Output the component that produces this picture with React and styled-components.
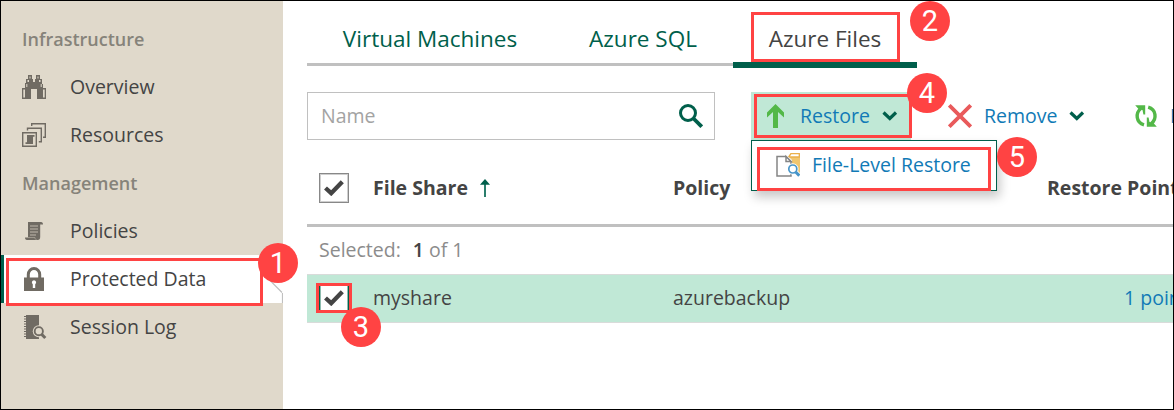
import React from "react";
import styled, { createGlobalStyle, css } from "styled-components";

const c = {
  green: "#005f4b",
  mint: "#c0e8d6",
  sand: "#e0d9cb",
  icon: "#706b63",
  text: "#444444",
  link: "#117ab6",
  line: "#c0c0c0",
  red: "#ff4343",
};

const GlobalStyle = createGlobalStyle`
  * { box-sizing: border-box; }
  body { margin: 0; background: #fff; }
  svg { display: block; flex: none; }
`;

const Frame = styled.div`
  position: relative;
  display: flex;
  width: 1174px;
  height: 410px;
  border: 1px solid #000;
  overflow: hidden;
  background: #fff;
  color: ${c.text};
  font-family: "Open Sans", sans-serif;
  font-size: 19.5px;
  line-height: 26px;
  white-space: nowrap;
`;

const Sidebar = styled.nav`
  flex: none;
  width: 282px;
  padding-top: 14px;
  background: ${c.sand};
`;

const NavHeading = styled.div`
  display: flex;
  align-items: center;
  height: 48px;
  padding-left: 21px;
  color: #86837a;
  font-weight: 600;
  font-size: 18px;
`;

const NavItem = styled.div`
  display: flex;
  align-items: center;
  gap: 24px;
  height: 48px;
  padding-left: 21px;
  ${(p) =>
    p.$active &&
    css`
      position: relative;
      padding-left: 18px;
      border-left: 3px solid ${c.green};
      background: #fff;
    `}
`;

const Notch = styled.svg`
  position: absolute;
  top: 0;
  right: 0;
`;

const Main = styled.main`
  flex: 1;
  min-width: 0;
  padding-left: 24px;
`;

const Tabs = styled.div`
  display: flex;
  height: 67px;
  padding-top: 14px;
`;

const TabStrip = styled.div`
  display: flex;
  height: 51px;
  width: 610px;
  border-bottom: 3px solid ${c.line};
`;

const Tab = styled.div`
  flex: none;
  display: flex;
  justify-content: center;
  width: ${(p) => p.$width}px;
  height: ${(p) => (p.$active ? 53 : 48)}px;
  padding-top: 8px;
  font-size: 22.5px;
  line-height: 32px;
  color: ${(p) => (p.$active ? c.text : c.green)};
  border-bottom: ${(p) => (p.$active ? `6px solid ${c.green}` : "0")};
`;

const Toolbar = styled.div`
  display: flex;
  height: 48px;
  margin-top: 24px;
`;

const Search = styled.div`
  flex: none;
  display: flex;
  align-items: center;
  justify-content: space-between;
  width: 408px;
  margin-right: 36px;
  padding: 0 11px 0 13px;
  border: 1px solid ${c.line};
  color: #a3a3a3;
`;

const ToolButton = styled.div`
  position: relative;
  flex: none;
  display: flex;
  align-items: center;
  height: 48px;
  width: ${(p) => p.$width}px;
  padding-left: ${(p) => p.$indent || 13}px;
  gap: 12px;
  color: ${c.link};
  background: ${(p) => (p.$open ? c.mint : "transparent")};
`;

const Menu = styled.div`
  position: absolute;
  z-index: 2;
  top: 48px;
  left: 0;
  width: 246px;
  height: 51px;
  padding: 0 0 1px 24px;
  display: flex;
  align-items: center;
  gap: 12px;
  background: #fff;
  border: 1px solid ${c.green};
  box-shadow: 3px 6px 10px rgba(0, 0, 0, 0.22);
`;

const Row = styled.div`
  display: grid;
  grid-template-columns: 66px 300px 374px 1fr;
  align-items: center;
`;

const HeadRow = styled(Row)`
  height: 87px;
  padding-top: 11px;
  border-bottom: 3px solid ${c.line};
  font-weight: 700;
`;

const DataRow = styled(Row)`
  height: 49px;
  padding-bottom: 1px;
  border-top: 1px solid #d9dbda;
  border-bottom: 1px solid #d9dbda;
  background: ${c.mint};
`;

const Sortable = styled.div`
  display: flex;
  align-items: center;
  gap: 12px;
`;

const Points = styled.div`
  padding-left: 77px;
  color: ${c.link};
`;

const Summary = styled.div`
  display: flex;
  align-items: center;
  height: 47px;
  padding: 0 0 2px 12px;
  color: #8c8c8c;
  b { margin: 0 5px 0 12px; color: ${c.text}; font-weight: 600; }
`;

const Checkbox = styled.div`
  display: flex;
  align-items: center;
  justify-content: center;
  width: 30px;
  height: 30px;
  margin-left: 12px;
  border: 1px solid ${(p) => (p.$focus ? c.green : "#888")};
  box-shadow: inset 0 0 0 1px ${(p) => (p.$focus ? "#8dbcaf" : "#cfcfcf")};
  background: #fff;
`;

/* Numbered callouts lie over the page. */
const Outline = styled.div`
  position: absolute;
  z-index: 3;
  left: ${(p) => p.$x - 1}px;
  top: ${(p) => p.$y - 1}px;
  width: ${(p) => p.$w}px;
  height: ${(p) => p.$h}px;
  border: 3px solid ${c.red};
`;

const Badge = styled.div`
  position: absolute;
  z-index: 4;
  left: ${(p) => p.$x - 1}px;
  top: ${(p) => p.$y - 1}px;
  width: 40px;
  height: 40px;
  border-radius: 50%;
  background: ${c.red};
  color: #fff;
  font: 29px/41px Roboto, sans-serif;
  text-align: center;
`;

const Binoculars = () => (
  <svg width="24" height="24" viewBox="0 0 24 24" fill={c.icon}>
    <path d="M6 0h4v4h1v3h2V4h1V0h4v4h2v5h1v4h3v11h-9V14h-6v10H0V13h3V8h1V4h2z" />
    <path d="M7.5 1.5h1v2h-1zM15.5 1.5h1v2h-1zM5.5 5h1.5v2H5.5zM17 5h1.5v2H17zM4.3 9h1v3h-1zM18.7 9h1v3h-1zM1.3 14.5H3v8H1.3zM21 14.5h1.7v8H21z" fill={c.sand} />
  </svg>
);

const Resources = () => (
  <svg width="24" height="24" viewBox="0 0 24 24" fill="none" stroke={c.icon} strokeWidth="1.4">
    <path d="M.7 9.700h13.600v13.600H.7zM5.500 7.500V5.200h13.800v13.500h-2.500M9.700 3V.7h13.600v13.600H21" />
    <path d="M5 12h7.500v1.800H11V21H3.500v-1.800H5z" fill={c.icon} stroke="none" />
  </svg>
);

const Scroll = () => (
  <svg width="24" height="24" viewBox="0 0 24 24">
    <path d="M6 3h13c1.500 0 2 1 2 2.500h-2.800V18c0 2-.8 3-2.500 3H5c-1.500 0-2-1-2-2.500h3z" fill={c.icon} />
    <path d="M8 7h8M8 10h8M8 13h8M8 16h6" stroke="#c9c2b6" strokeWidth=".9" />
    <path d="M4 18.500h9c0 1.500.5 2 1.500 2" stroke="#a8a297" strokeWidth=".8" fill="none" />
  </svg>
);

const Lock = () => (
  <svg width="24" height="24" viewBox="0 0 24 24">
    <path d="M6.300 11V7.500a5.700 6 0 0 1 11.400 0V11" fill="none" stroke={c.icon} strokeWidth="3" />
    <path d="M2 10.500h20V24H2z" fill={c.icon} />
    <path d="M12 13.200a2.200 2.200 0 0 1 1.200 4V21h-2.400v-3.800a2.200 2.200 0 0 1 1.200-4z" fill="#fff" />
  </svg>
);

const Journal = () => (
  <svg width="24" height="24" viewBox="0 0 24 24" overflow="visible">
    <path d="M4 0h13v24H4z" fill={c.icon} />
    <path d="M2 1.500h2.500M2 4h2.500M2 6.500h2.500M2 9h2.500M2 11.500h2.500M2 14h2.500M2 16.500h2.500M2 19h2.500M2 21.500h2.500" stroke={c.icon} strokeWidth="1.200" />
    <circle cx="16.800" cy="16.200" r="6" fill={c.sand} />
    <path d="m18 18 4 4" stroke={c.sand} strokeWidth="4.500" />
    <circle cx="16.800" cy="16.200" r="4.100" fill={c.sand} stroke={c.icon} strokeWidth="1.900" />
    <path d="m19.600 19.200 3.700 3.800" stroke={c.icon} strokeWidth="3" />
  </svg>
);

const SearchIcon = () => (
  <svg width="24" height="24" viewBox="0 0 24 24" fill="none" stroke={c.green}>
    <circle cx="9" cy="9" r="7.500" strokeWidth="3" />
    <path d="m14.500 14.500 8.200 8.200" strokeWidth="3.800" />
  </svg>
);

const UpArrow = () => (
  <svg width="24" height="24" viewBox="0 0 24 24">
    <path d="M11.500 0 20 8.500v5l-6-5.500v16H9V8l-6 5.500v-5z" fill="#53b848" />
  </svg>
);

const Cross = () => (
  <svg width="24" height="24" viewBox="0 0 24 24">
    <path d="m1.300 1.300 21.400 21.400M22.700 1.300 1.300 22.700" stroke="#e95a5b" strokeWidth="3.800" />
  </svg>
);

const Chevron = () => (
  <svg width="16" height="10" viewBox="0 0 16 10">
    <path d="m1.500 1.500 6.300 6L14 1.500" fill="none" stroke={c.green} strokeWidth="3.200" />
  </svg>
);

const Rescan = () => (
  <svg width="24" height="24" viewBox="0 0 24 24">
    <path d="M10 20.800C1.800 18.500 1.300 9 6.800 4.500M14.200 3.200c8.200 2.300 8.700 11.800 3.200 16.300" fill="none" stroke="#53b848" strokeWidth="3.400" />
    <path d="M1.200 1.200h10v9.200h-1.800L8.500 6 5 5.500zM22.800 22.800h-10v-9.200h1.800l.9 4.400 3.500.5z" fill="#53b848" />
  </svg>
);

const FileRestore = () => (
  <svg width="24" height="24" viewBox="0 0 24 24">
    <path d="m12.500 3.500 2-3H24v20l-8-3V7z" fill="#f1c66e" />
    <path d="M13 3.500 15 .7h8.300V4H14z" fill="#fff" stroke="#eab04a" strokeWidth="1.300" />
    <path d="M1 3.500h9l5 5V23H1z" fill="#fff" stroke="#858585" strokeWidth="1.500" />
    <path d="M10 3.500v5h5z" fill="#fff" stroke="#858585" strokeWidth="1.500" />
    <circle cx="16.800" cy="16" r="5.700" fill="#fff" />
    <path d="m18.500 18 4 4" stroke="#fff" strokeWidth="5" />
    <circle cx="16.800" cy="16" r="4" fill="#fff" stroke="#4795c9" strokeWidth="1.700" />
    <path d="m19.700 19 3.600 3.700" stroke="#4795c9" strokeWidth="3" />
  </svg>
);

const SortUp = () => (
  <svg width="10" height="18" viewBox="0 0 10 18">
    <path d="M5 4v14" stroke="#2b7e6c" strokeWidth="2" />
    <path d="m5 0 5 5.700H0z" fill={c.green} />
  </svg>
);

const Check = () => (
  <svg width="20" height="16" viewBox="0 0 20 16">
    <path d="M1.500 8 7.200 13.200 18.300 1.700" fill="none" stroke={c.text} strokeWidth="4.300" />
  </svg>
);

const Spacer = styled.span`
  width: 12px;
`;

const outlines = [
  [6, 258, 257, 48],
  [751, 12, 149, 50],
  [316, 283, 36, 30],
  [754, 94, 158, 44],
  [757, 147, 234, 44],
];

const badges = [
  [258, 243],
  [910, 1],
  [341, 307],
  [907, 73],
  [997, 137],
];

export default function App() {
  return (
    <Frame>
      <GlobalStyle />
      <Sidebar>
        <NavHeading>Infrastructure</NavHeading>
        <NavItem><Binoculars />Overview</NavItem>
        <NavItem><Resources />Resources</NavItem>
        <NavHeading>Management</NavHeading>
        <NavItem><Scroll />Policies</NavItem>
        <NavItem $active>
          <Lock />Protected Data
          <Notch width="15" height="48" viewBox="0 0 15 48">
            <path d="M14.500 0v10L.5 24l13.500 13.500M14.500 38v10" fill="none" stroke={c.line} strokeWidth="1.200" />
          </Notch>
        </NavItem>
        <NavItem><Journal />Session Log</NavItem>
      </Sidebar>
      <Main>
        <Tabs>
          <TabStrip>
            <Tab $width={246}>Virtual Machines</Tab>
            <Tab $width={180}>Azure SQL</Tab>
            <Tab $width={184} $active>Azure Files</Tab>
          </TabStrip>
        </Tabs>
        <Toolbar>
          <Search>Name<SearchIcon /></Search>
          <ToolButton $width={160} $open>
            <UpArrow />Restore<Chevron />
            <Menu><FileRestore />File-Level Restore</Menu>
          </ToolButton>
          <ToolButton $width={211}>
            <Spacer /><Cross />Remove<Chevron />
          </ToolButton>
          <ToolButton $width={160} $indent={12}><Rescan />Rescan</ToolButton>
        </Toolbar>
        <HeadRow>
          <Checkbox><Check /></Checkbox>
          <Sortable>File Share<SortUp /></Sortable>
          <span>Policy</span>
          <span>Restore Points</span>
        </HeadRow>
        <Summary>Selected: <b>1</b> of 1</Summary>
        <DataRow>
          <Checkbox $focus><Check /></Checkbox>
          <span>myshare</span>
          <span>azurebackup</span>
          <Points>1 point</Points>
        </DataRow>
      </Main>
      {outlines.map(([x, y, w, h], i) => (
        <Outline key={i} $x={x} $y={y} $w={w} $h={h} />
      ))}
      {badges.map(([x, y], i) => (
        <Badge key={i} $x={x} $y={y}>{i + 1}</Badge>
      ))}
    </Frame>
  );
}
